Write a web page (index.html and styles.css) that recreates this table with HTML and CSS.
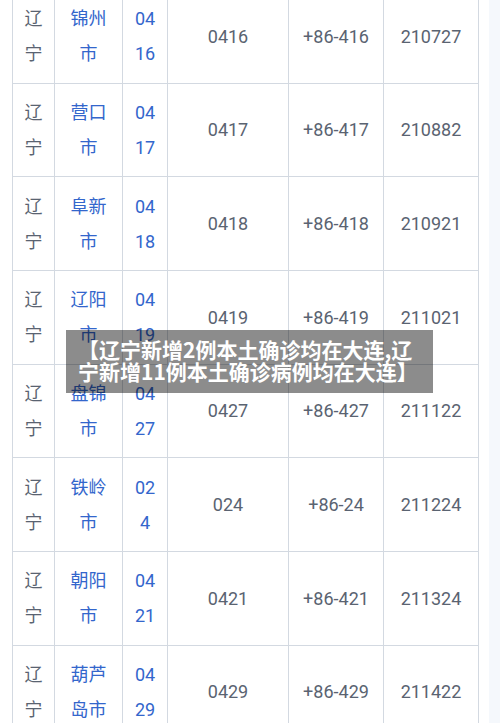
FILE: index.html
```html
<!DOCTYPE html>
<html lang="zh">
<head>
<meta charset="utf-8">
<title>辽宁</title>
<link rel="stylesheet" href="styles.css">
</head>
<body>
<div class="page">
  <main class="content">
    <table class="codes">
      <colgroup>
        <col class="c1"><col class="c2"><col class="c3"><col class="c4"><col class="c5"><col class="c6">
      </colgroup>
      <tbody>
        <tr><td>辽宁</td><td class="link">锦州市</td><td class="link">0416</td><td>0416</td><td>+86-416</td><td>210727</td></tr>
        <tr><td>辽宁</td><td class="link">营口市</td><td class="link">0417</td><td>0417</td><td>+86-417</td><td>210882</td></tr>
        <tr><td>辽宁</td><td class="link">阜新市</td><td class="link">0418</td><td>0418</td><td>+86-418</td><td>210921</td></tr>
        <tr><td>辽宁</td><td class="link">辽阳市</td><td class="link">0419</td><td>0419</td><td>+86-419</td><td>211021</td></tr>
        <tr><td>辽宁</td><td class="link">盘锦市</td><td class="link">0427</td><td>0427</td><td>+86-427</td><td>211122</td></tr>
        <tr><td>辽宁</td><td class="link">铁岭市</td><td class="link">024</td><td>024</td><td>+86-24</td><td>211224</td></tr>
        <tr><td>辽宁</td><td class="link">朝阳市</td><td class="link">0421</td><td>0421</td><td>+86-421</td><td>211324</td></tr>
        <tr><td>辽宁</td><td class="link">葫芦岛市</td><td class="link">0429</td><td>0429</td><td>+86-429</td><td>211422</td></tr>
      </tbody>
    </table>
  </main>
  <aside class="strip"></aside>
</div>
<div class="caption">【辽宁新增2例本土确诊均在大连,辽宁新增11例本土确诊病例均在大连】</div>
</body>
</html>
```
FILE: styles.css
```css
html, body {
  margin: 0;
  padding: 0;
  width: 500px;
  height: 723px;
  overflow: hidden;
  background: #ffffff;
}

.page {
  display: flex;
  height: 723px;
}

.content {
  width: 489px;
  flex: none;
  background: #ffffff;
  padding-left: 12px;
  box-sizing: border-box;
}

.strip {
  flex: 1;
  background: #f5f8fc;
}

.codes {
  border-collapse: collapse;
  table-layout: fixed;
  width: 466px;
  margin-top: -11px;
  font-family: Roboto, "Noto Sans CJK SC", sans-serif;
  font-size: 18px;
  line-height: 35px;
  color: #5a6371;
}

.c1 { width: 42px; }
.c2 { width: 68px; }
.c3 { width: 45px; }
.c4 { width: 121px; }
.c5 { width: 95px; }
.c6 { width: 95px; }

.codes td {
  border: 1px solid #d3d9e1;
  padding: 11.33px 8px;
  text-align: center;
  vertical-align: middle;
  word-break: break-all;
}

.codes td.link {
  color: #3366cc;
}

.caption {
  position: absolute;
  left: 66px;
  top: 330px;
  width: 367px;
  height: 63px;
  box-sizing: border-box;
  padding: 9px 10px 0 12px;
  background: rgba(0, 0, 0, 0.45);
  color: #ffffff;
  font-family: "Noto Sans CJK SC", sans-serif;
  font-weight: 700;
  font-size: 21px;
  line-height: 21.5px;
}
```
